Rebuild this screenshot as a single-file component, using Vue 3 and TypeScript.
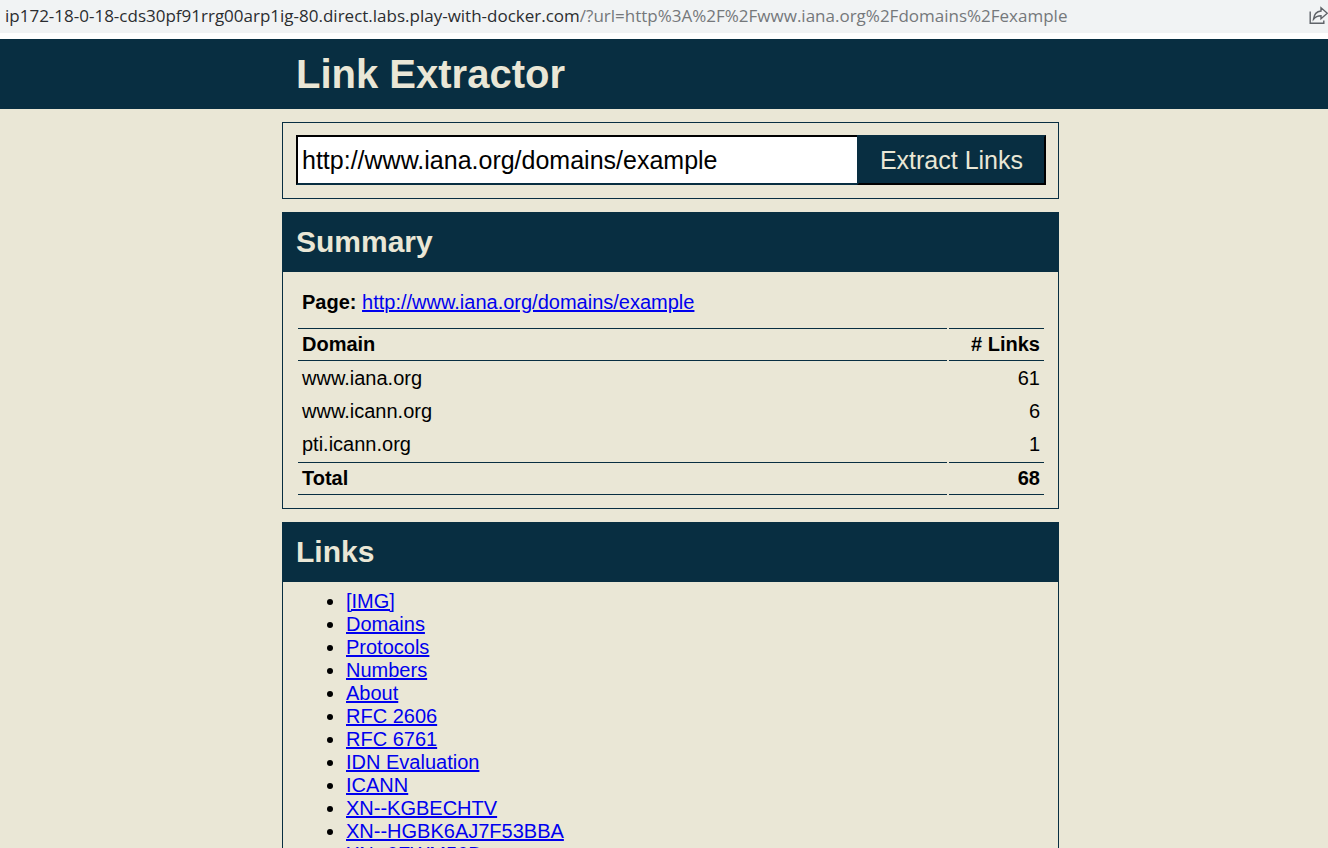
<script setup lang="ts">
import { ref } from 'vue'

interface DomainRow {
  name: string
  links: number
}

const host = 'ip172-18-0-18-cds30pf91rrg00arp1ig-80.direct.labs.play-with-docker.com'
const query = '/?url=http%3A%2F%2Fwww.iana.org%2Fdomains%2Fexample'
const page = 'http://www.iana.org/domains/example'
const url = ref<string>(page)

const domains: DomainRow[] = [
  { name: 'www.iana.org', links: 61 },
  { name: 'www.icann.org', links: 6 },
  { name: 'pti.icann.org', links: 1 },
]
const total = domains.reduce((sum, row) => sum + row.links, 0)

const links: string[] = [
  '[IMG]',
  'Domains',
  'Protocols',
  'Numbers',
  'About',
  'RFC 2606',
  'RFC 6761',
  'IDN Evaluation',
  'ICANN',
  'XN--KGBECHTV',
  'XN--HGBK6AJ7F53BBA',
  'XN--0ZWM56D',
]
</script>

<template>
  <div class="window">
    <div class="address-bar">
      <div class="address"><span class="host">{{ host }}</span>{{ query }}</div>
      <button class="share" type="button" aria-label="Share this page">
        <svg viewBox="0 0 20 20" width="20" height="20" fill="none" stroke="#5f6368" stroke-width="1.4">
          <path d="M2.200 5.500V17.300H15.800V14.500" />
          <path d="M13 1.800L19.300 7.300L13 12.800V9.800C9.800 9.800 7.500 10.700 5.500 13.200C6 8.800 8.400 5.400 13 5Z" />
        </svg>
      </button>
    </div>

    <div class="page">
      <header class="banner">
        <h1 class="column">Link Extractor</h1>
      </header>

      <main>
        <div class="column">
          <form class="panel search" @submit.prevent>
            <input v-model="url" class="url" type="text" aria-label="Page URL" />
            <button class="extract" type="submit">Extract Links</button>
          </form>

          <section class="panel">
            <h2>Summary</h2>
            <div class="summary">
              <p><strong>Page:</strong> <a :href="page">{{ page }}</a></p>
              <table>
                <thead>
                  <tr><th scope="col">Domain</th><th scope="col" class="count"># Links</th></tr>
                </thead>
                <tbody>
                  <tr v-for="row in domains" :key="row.name">
                    <td>{{ row.name }}</td>
                    <td class="count">{{ row.links }}</td>
                  </tr>
                </tbody>
                <tfoot>
                  <tr><th scope="row">Total</th><th class="count">{{ total }}</th></tr>
                </tfoot>
              </table>
            </div>
          </section>

          <section class="panel">
            <h2>Links</h2>
            <ul>
              <li v-for="link in links" :key="link"><a href="#">{{ link }}</a></li>
            </ul>
          </section>
        </div>
      </main>
    </div>
  </div>
</template>

<style>
body {
  margin: 0;
  background: #eae7d6;
}
</style>

<style scoped>
* {
  box-sizing: border-box;
}

.window {
  height: 100vh;
  overflow: hidden;
  background: #eae7d6;
  color: #000;
  font: 20px/23px "Liberation Sans", Arial, sans-serif;
}

.address-bar {
  display: flex;
  align-items: center;
  justify-content: space-between;
  height: 39px;
  padding: 0 0 2px 5px;
  border-bottom: 6px solid #fff;
  background: #f1f3f4;
  color: #75787b;
  font: 17px/31px "Open Sans", "Noto Sans", sans-serif;
  white-space: nowrap;
}

.host {
  color: #2b2d30;
}

.share {
  flex: none;
  width: 20px;
  height: 20px;
  padding: 0;
  border: 0;
  background: none;
}

.share svg {
  display: block;
}

.page {
  --navy: #082e41;
  --sand: #eae7d6;
}

.banner,
main {
  padding-left: 13px;
}

.banner {
  background: var(--navy);
}

.column {
  max-width: 777px;
  margin: 0 auto;
}

h1 {
  padding: 12px 14px;
  color: var(--sand);
  font-size: 40px;
  line-height: 46px;
}

.panel {
  margin-top: 13px;
  border: 1px solid var(--navy);
}

.search {
  display: flex;
  padding: 12px 12px 13px 13px;
}

.url,
.extract {
  height: 50px;
  border: 2px solid var(--navy);
  border-radius: 0;
  font: 25px/30px "Liberation Sans", Arial, sans-serif;
}

.url {
  flex: 1;
  min-width: 0;
  padding: 0 4px;
  border-top-color: #000;
  border-left-color: #000;
  border-right-width: 0;
  background: #fff;
  color: #000;
  outline: none;
}

.extract {
  padding: 0 21px;
  border-right-color: #000;
  border-bottom-color: #000;
  background: var(--navy);
  color: var(--sand);
}

h2 {
  margin: 0;
  padding: 12px 13px 13px;
  background: var(--navy);
  color: var(--sand);
  font-size: 30px;
  line-height: 34px;
}

.summary {
  padding: 19px 12px 11px 13px;
}

p {
  margin: 0 6px 12px;
}

a {
  color: #0000ee;
  text-decoration: underline;
}

table {
  width: 100%;
  border-spacing: 2px;
}

th,
td {
  padding: 4px;
  text-align: left;
}

th {
  border: solid var(--navy);
  border-width: 1px 0;
}

.count {
  width: 95px;
  text-align: right;
}

ul {
  margin: 0;
  padding: 8px 13px 13px 63px;
}
</style>
